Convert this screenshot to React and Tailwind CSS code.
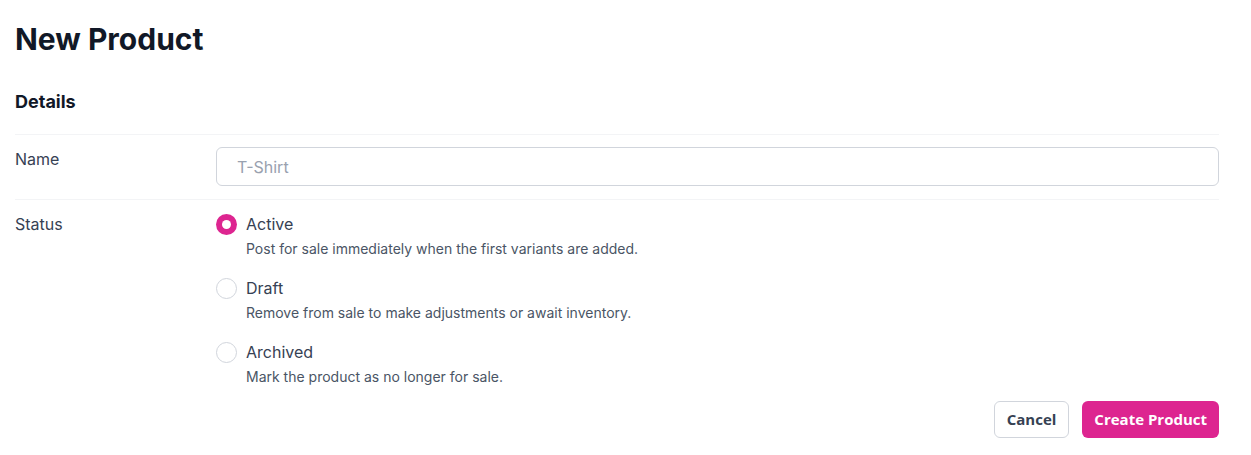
import React, { useState } from "react";

const options = [
  {
    value: "active",
    label: "Active",
    desc: "Post for sale immediately when the first variants are added.",
  },
  {
    value: "draft",
    label: "Draft",
    desc: "Remove from sale to make adjustments or await inventory.",
  },
  {
    value: "archived",
    label: "Archived",
    desc: "Mark the product as no longer for sale.",
  },
];

const App = () => {
  const [status, setStatus] = useState("active");

  return (
    <div className="min-h-screen bg-white pl-[15px] pr-8 pt-[21px] font-['Inter',sans-serif] text-[#111827]">
      {/* Title */}
      <h1 className="text-[30px] leading-[36px] font-bold">New Product</h1>

      {/* Details */}
      <h2 className="mt-[33px] text-[18px] leading-[24px] font-bold">Details</h2>
      <div className="mt-[20px] border-t border-gray-100">
        <div className="grid grid-cols-[201px_1fr] items-start border-b border-gray-100 pt-[12px] pb-[13px]">
          <label className="text-[16px] leading-[24px] text-gray-700">Name</label>
          <input
            type="text"
            placeholder="T-Shirt"
            className="h-[39px] w-full rounded-md border border-gray-300 px-[20px] text-[16px] text-gray-700 placeholder:text-gray-400 outline-none"
          />
        </div>

        <div className="grid grid-cols-[201px_1fr] pt-[12px]">
          <label className="text-[16px] leading-[24px] text-gray-700">Status</label>
          <div className="flex flex-col gap-[16px]">
            {options.map((o) => (
              <label key={o.value} className="flex flex-col cursor-pointer">
                <div className="flex items-center gap-[9px]">
                  <span
                    className={`flex h-[21px] w-[21px] items-center justify-center rounded-full ${
                      status === o.value
                        ? "bg-[#dd2590]"
                        : "border border-gray-300 bg-white"
                    }`}
                    onClick={() => setStatus(o.value)}
                  >
                    {status === o.value && (
                      <span className="h-[9px] w-[9px] rounded-full bg-white" />
                    )}
                  </span>
                  <span className="text-[16px] leading-[24px] text-gray-700">{o.label}</span>
                </div>
                <p className="ml-[30px] mt-[1px] text-[14px] leading-[23px] text-gray-600">{o.desc}</p>
              </label>
            ))}
          </div>
        </div>

        <div className="mt-[13px] flex justify-end gap-[13px]">
          <button className="h-[37px] rounded-md border border-gray-300 bg-white px-[12px] font-['Open_Sans',sans-serif] text-[15px] font-bold text-gray-700">
            Cancel
          </button>
          <button className="h-[37px] rounded-md bg-[#dd2590] px-[12px] font-['Open_Sans',sans-serif] text-[15px] font-bold text-white">
            Create Product
          </button>
        </div>
      </div>
    </div>
  );
};

export default App;
